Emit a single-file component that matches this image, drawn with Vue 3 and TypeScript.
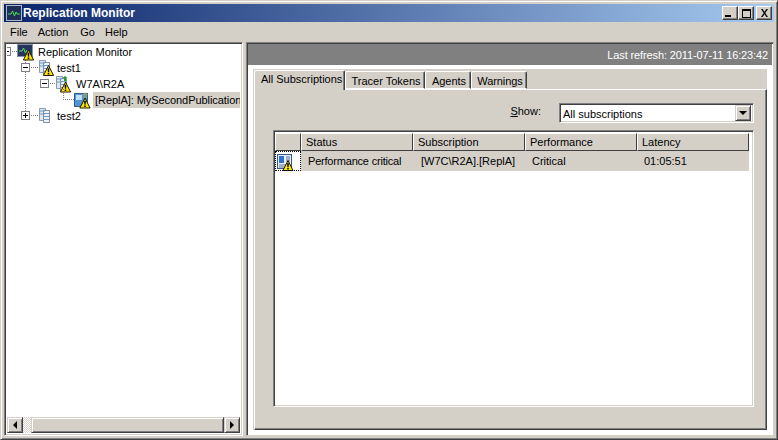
<script setup lang="ts">
const tabs = ['Tracer Tokens', 'Agents', 'Warnings']
const cols = ['Status', 'Subscription', 'Performance', 'Latency']
const cells = ['Performance critical', '[W7C\\R2A].[ReplA]', 'Critical', '01:05:51']
const menus = ['File', 'Action', 'Go', 'Help']
</script>

<template>
  <div class="win">
    <svg class="defs" width="0" height="0">
      <defs>
        <g id="warn">
          <path d="M5.5 .5 10.6 10.5H.4Z" fill="#ffe600" stroke="#1f1a00" stroke-width="1" stroke-linejoin="round" />
          <path d="M4.6 3.2h1.8l-.3 4h-1.2Z M4.7 8h1.6v1.5H4.7Z" fill="#000" />
        </g>
        <g id="db">
          <path d="M1.5 .5h6v12h-6Z" fill="#dfe6ee" stroke="#8a9aae" />
          <path d="M5.5 2.5h6v12h-6Z" fill="#eef2f7" stroke="#7d8ea5" />
          <path d="M2 3h5M2 6h5M6 5.5h5M6 8.5h5M6 11.5h5" stroke="#6f9bd0" />
        </g>
      </defs>
    </svg>

    <header class="title">
      <svg class="title-icon" width="16" height="16" viewBox="0 0 16 16">
        <rect x=".5" y=".5" width="15" height="15" fill="#1f2f58" stroke="#aeb6c8" />
        <path d="M2 9h3l1.5-3 2 5 1.5-4 1 2h3" fill="none" stroke="#43e04a" />
      </svg>
      <span class="title-text">Replication Monitor</span>
      <div class="caps">
        <button class="cap"><i class="cap-min"></i></button>
        <button class="cap"><i class="cap-max"></i></button>
        <button class="cap cap-close">
          <svg width="9" height="8" viewBox="0 0 9 8"><path d="M1 0h1.6L4.5 2.8 6.4 0H8L5.3 4 8 8H6.4L4.5 5.2 2.6 8H1l2.7-4Z" fill="#000" /></svg>
        </button>
      </div>
    </header>

    <nav class="menu">
      <span v-for="m in menus" :key="m" class="menu-item">{{ m }}</span>
    </nav>

    <main class="body">
      <section class="tree-pane">
        <div class="tree">
          <i class="dots vline v1"></i>
          <div class="node n0">
            <i class="exp"><b></b></i><i class="dots hline h0"></i>
            <svg class="ico" width="16" height="16" viewBox="0 0 16 16">
              <rect x=".5" y=".5" width="15" height="12" fill="#24365f" stroke="#8794ad" />
              <path d="M2 7h3l1.5-3 2 5 1.5-3" fill="none" stroke="#5fe05f" />
              <use href="#warn" x="6" y="5.5" />
            </svg>
            <span class="lbl">Replication Monitor</span>
          </div>
          <div class="node n1">
            <i class="exp"><b></b></i><i class="dots hline h1"></i>
            <svg class="ico" width="16" height="16" viewBox="0 0 16 16"><use href="#db" /><use href="#warn" x="5" y="5" /></svg>
            <span class="lbl l3">test1</span>
          </div>
          <div class="node n2">
            <i class="exp"><b></b></i><i class="dots hline h2"></i>
            <svg class="ico" width="16" height="16" viewBox="0 0 16 16">
              <use href="#db" />
              <path d="M9 5V2H7.5L10 0l2.5 2H11v3Z" fill="#1f9c2c" />
              <use href="#warn" x="5" y="5.5" />
            </svg>
            <span class="lbl">W7A\R2A</span>
          </div>
          <div class="node n3">
            <i class="dots vline v3"></i><i class="dots hline h3"></i>
            <svg class="ico" width="16" height="16" viewBox="0 0 16 16">
              <rect x=".5" y="1.5" width="13" height="13" fill="#4f93d8" stroke="#34598f" />
              <path d="M2 3h6v5H2Z" fill="#bfe0fa" />
              <path d="M9 6V3H7.5L11 .5 14.5 3H13v3Z" fill="#7f9f82" />
              <use href="#warn" x="5.5" y="5.5" />
            </svg>
            <span class="lbl sel">[ReplA]: MySecondPublication</span>
          </div>
          <div class="node n1">
            <i class="exp exp-plus"><b></b></i><i class="dots hline h1"></i>
            <svg class="ico" width="16" height="16" viewBox="0 0 16 16"><use href="#db" /></svg>
            <span class="lbl l3">test2</span>
          </div>
        </div>
        <div class="hscroll">
          <button class="sbtn"><i class="arr-l"></i></button>
          <i class="dither"></i>
          <i class="thumb"></i>
          <button class="sbtn"><i class="arr-r"></i></button>
        </div>
      </section>

      <section class="right">
        <div class="refresh">Last refresh: 2011-07-11 16:23:42</div>
        <div class="tabarea">
          <div class="tabs">
            <div class="tab active">All Subscriptions</div>
            <div v-for="t in tabs" :key="t" class="tab">{{ t }}</div>
          </div>
          <div class="page">
            <div class="show">
              <span class="show-label"><u>S</u>how:</span>
              <div class="select">
                <span class="select-text">All subscriptions</span>
                <i class="select-btn"><i class="arr-d"></i></i>
              </div>
            </div>
            <div class="list">
              <div class="grid-row head">
                <div class="hcell"></div>
                <div v-for="c in cols" :key="c" class="hcell">{{ c }}</div>
              </div>
              <div class="grid-row data">
                <div class="focus">
                  <svg width="16" height="16" viewBox="0 0 16 16">
                    <rect x=".5" y=".5" width="14" height="14" fill="#e8eef8" stroke="#34598f" />
                    <path d="M2 2h5v7H2Z" fill="#2f6fd0" />
                    <path d="M9 3h4M9 5h4M9 7h4M2 11h11M2 13h6" stroke="#5b7396" />
                    <use href="#warn" x="5.5" y="6" />
                  </svg>
                </div>
                <div v-for="c in cells" :key="c" class="dcell">{{ c }}</div>
              </div>
            </div>
          </div>
        </div>
      </section>
    </main>
  </div>
</template>

<style scoped>
.win {
  box-sizing: border-box;
  width: 778px;
  height: 440px;
  background: #d4d0c8;
  border: 1px solid;
  border-color: #d4d0c8 #404040 #404040 #d4d0c8;
  box-shadow: inset 1px 1px 0 #fff, inset -1px -1px 0 #808080;
  padding: 3px;
  display: flex;
  flex-direction: column;
  overflow: hidden;
  font: 11px "Liberation Sans", Arial, sans-serif;
  color: #000;
}
.defs { position: absolute; }
.title {
  flex: none;
  height: 18px;
  display: flex;
  align-items: center;
  background: linear-gradient(90deg, #0a246a, #a6caf0);
  color: #fff;
}
.title-icon { margin: 0 1px 0 2px; }
.title-text { font-weight: 700; font-size: 12px; }
.caps { margin-left: auto; display: flex; margin-right: 2px; }
.cap {
  box-sizing: border-box;
  width: 16px;
  height: 14px;
  padding: 0;
  background: #d4d0c8;
  border: 1px solid;
  border-color: #fff #404040 #404040 #fff;
  box-shadow: inset -1px -1px 0 #808080;
  display: flex;
  align-items: center;
  justify-content: center;
  position: relative;
}
.cap-close { margin-left: 2px; }
.cap-min { width: 6px; height: 2px; background: #000; margin: 6px 4px 0 0; }
.cap-max { box-sizing: border-box; width: 9px; height: 9px; border: 1px solid #000; border-top-width: 2px; }
.menu { flex: none; height: 19px; display: flex; align-items: center; padding: 0 0 0 6px; box-sizing: border-box; gap: 10px; }
.menu-item:nth-child(2) { margin-right: 2px; }
.body { flex: 1; min-height: 0; display: flex; gap: 3px; margin-top: 1px; }

.tree-pane {
  box-sizing: border-box;
  width: 239px;
  background: #fff;
  border: 1px solid;
  border-color: #808080 #fff #fff #808080;
  box-shadow: inset 1px 1px 0 #404040, inset -1px -1px 0 #d4d0c8;
  padding: 1px 2px 2px;
  display: flex;
  flex-direction: column;
}
.tree { flex: 1; position: relative; overflow: hidden; }
.node { position: relative; height: 16px; display: flex; align-items: center; }
.n0 { padding-left: 10px; }
.n1 { padding-left: 31px; }
.n2 { padding-left: 48px; }
.n3 { padding-left: 67px; }
.ico { flex: none; overflow: visible; }
.lbl { margin-left: 5px; white-space: nowrap; }
.l3 { margin-left: 3px; }
.sel { background: #d4d0c8; margin-left: 3px; padding: 0 2px; height: 16px; line-height: 16px; flex: 1; letter-spacing: -.06px; }
.exp {
  position: absolute;
  box-sizing: border-box;
  width: 9px;
  height: 9px;
  border: 1px solid #808080;
  background: #fff;
  top: 3px;
  z-index: 1;
}
.exp b { position: absolute; left: 1px; top: 3px; width: 5px; height: 1px; background: #000; }
.exp-plus::after { content: ""; position: absolute; left: 3px; top: 1px; width: 1px; height: 5px; background: #000; }
.n0 .exp { left: -5px; }
.n1 .exp { left: 14px; }
.n2 .exp { left: 33px; }
.dots { position: absolute; display: block; }
.hline { height: 0; border-top: 1px dotted #808080; top: 7px; }
.vline { width: 0; border-left: 1px dotted #808080; }
.h0 { left: 3px; width: 7px; }
.h1 { left: 22px; width: 9px; }
.h2 { left: 41px; width: 7px; }
.h3 { left: 56px; width: 11px; }
.v1 { left: 18px; top: 12px; height: 55px; }
.v3 { left: 56px; top: -3px; height: 11px; }

.hscroll { flex: none; height: 16px; display: flex; margin-top: auto; background: #d4d0c8; }
.sbtn {
  box-sizing: border-box;
  flex: none;
  width: 16px;
  height: 16px;
  padding: 0;
  background: #d4d0c8;
  border: 1px solid;
  border-color: #d4d0c8 #404040 #404040 #d4d0c8;
  box-shadow: inset 1px 1px 0 #fff, inset -1px -1px 0 #808080;
  display: flex;
  align-items: center;
  justify-content: center;
}
.dither { flex: none; width: 8px; background: repeating-conic-gradient(#d4d0c8 0 25%, #fff 0 50%) 0 0 / 2px 2px; }
.thumb {
  flex: 1;
  box-sizing: border-box;
  border: 1px solid;
  border-color: #d4d0c8 #404040 #404040 #d4d0c8;
  box-shadow: inset 1px 1px 0 #fff, inset -1px -1px 0 #808080;
}
.arr-l { width: 0; height: 0; border: 4px solid transparent; border-right: 4px solid #000; border-left: 0; }
.arr-r { width: 0; height: 0; border: 4px solid transparent; border-left: 4px solid #000; border-right: 0; }
.arr-d { width: 0; height: 0; border: 4px solid transparent; border-top: 4px solid #000; border-bottom: 0; display: block; }

.right {
  box-sizing: border-box;
  flex: 1;
  min-width: 0;
  background: #fff;
  border: 1px solid;
  border-color: #808080 #d4d0c8 #d4d0c8 #808080;
  box-shadow: inset 1px 1px 0 #404040;
  display: flex;
  flex-direction: column;
  padding: 1px 1px 0 1px;
}
.refresh {
  flex: none;
  height: 21px;
  background: #808080;
  color: #fff;
  text-align: right;
  line-height: 22px;
  padding-right: 4px;
  letter-spacing: -.12px;
}
.tabarea {
  flex: 1;
  min-height: 0;
  margin: 4px 5px 5px 5px;
  background: #d4d0c8;
  display: flex;
  flex-direction: column;
  padding: 0 0 0 1px;
}
.tabs { flex: none; height: 20px; display: flex; align-items: flex-end; position: relative; z-index: 1; }
.tab {
  box-sizing: border-box;
  height: 18px;
  padding: 1px 0 0 2px;
  line-height: 16px;
  text-align: center;
  background: #d4d0c8;
  border: 1px solid;
  border-color: #fff #404040 transparent #fff;
  border-bottom: 0;
  border-radius: 2px 2px 0 0;
  box-shadow: inset -1px 0 0 #808080;
  white-space: nowrap;
}
.tab:nth-child(2) { width: 80px; }
.tab:nth-child(3) { width: 46px; }
.tab:nth-child(4) { width: 56px; letter-spacing: -.1px; }
.active { height: 20px; margin-bottom: -1px; padding: 0 0 0 6px; width: 91px; text-align: left; }
.tab:not(.active) { margin-bottom: 0; border-bottom: 1px solid #fff; }
.page {
  box-sizing: border-box;
  flex: 1;
  min-height: 0;
  border: 1px solid;
  border-color: #fff #404040 #404040 #fff;
  box-shadow: inset -1px -1px 0 #808080;
  display: flex;
  flex-direction: column;
  padding: 13px 12px 22px 18px;
}
.show { flex: none; height: 19px; display: flex; align-items: center; justify-content: flex-end; gap: 18px; }
.show-label { padding-bottom: 3px; }
.select {
  box-sizing: border-box;
  width: 195px;
  height: 20px;
  background: #fff;
  border: 1px solid;
  border-color: #808080 #fff #fff #808080;
  box-shadow: inset 1px 1px 0 #404040, inset -1px -1px 0 #d4d0c8;
  display: flex;
  align-items: center;
  padding: 2px;
}
.select-text { flex: 1; padding: 2px 0 0 1px; }
.select-btn {
  box-sizing: border-box;
  width: 16px;
  height: 16px;
  background: #d4d0c8;
  border: 1px solid;
  border-color: #d4d0c8 #404040 #404040 #d4d0c8;
  box-shadow: inset 1px 1px 0 #fff, inset -1px -1px 0 #808080;
  display: flex;
  align-items: center;
  justify-content: center;
}
.list {
  box-sizing: border-box;
  flex: 1;
  min-height: 0;
  margin-top: 8px;
  background: #fff;
  border: 1px solid;
  border-color: #808080 #fff #fff #808080;
  box-shadow: inset 1px 1px 0 #404040, inset -1px -1px 0 #d4d0c8;
  padding: 2px 0 0 1px;
}
.grid-row {
  display: grid;
  grid-template-columns: 26px 112px 112px 112px 112px;
  width: 474px;
}
.head { height: 18px; }
.hcell {
  box-sizing: border-box;
  background: #d4d0c8;
  border: 1px solid;
  border-color: #fff #404040 #404040 #fff;
  padding-left: 4px;
  line-height: 16px;
}
.data { height: 20px; }
.focus {
  box-sizing: border-box;
  outline: 1px dotted #000;
  outline-offset: -1px;
  padding: 3px 0 0 2px;
}
.focus svg { overflow: visible; display: block; }
.dcell { background: #d4d0c8; padding-left: 7px; line-height: 20px; white-space: nowrap; }
.dcell:nth-child(2) { letter-spacing: -.2px; }
.dcell:nth-child(3) { padding-left: 8px; }
</style>
